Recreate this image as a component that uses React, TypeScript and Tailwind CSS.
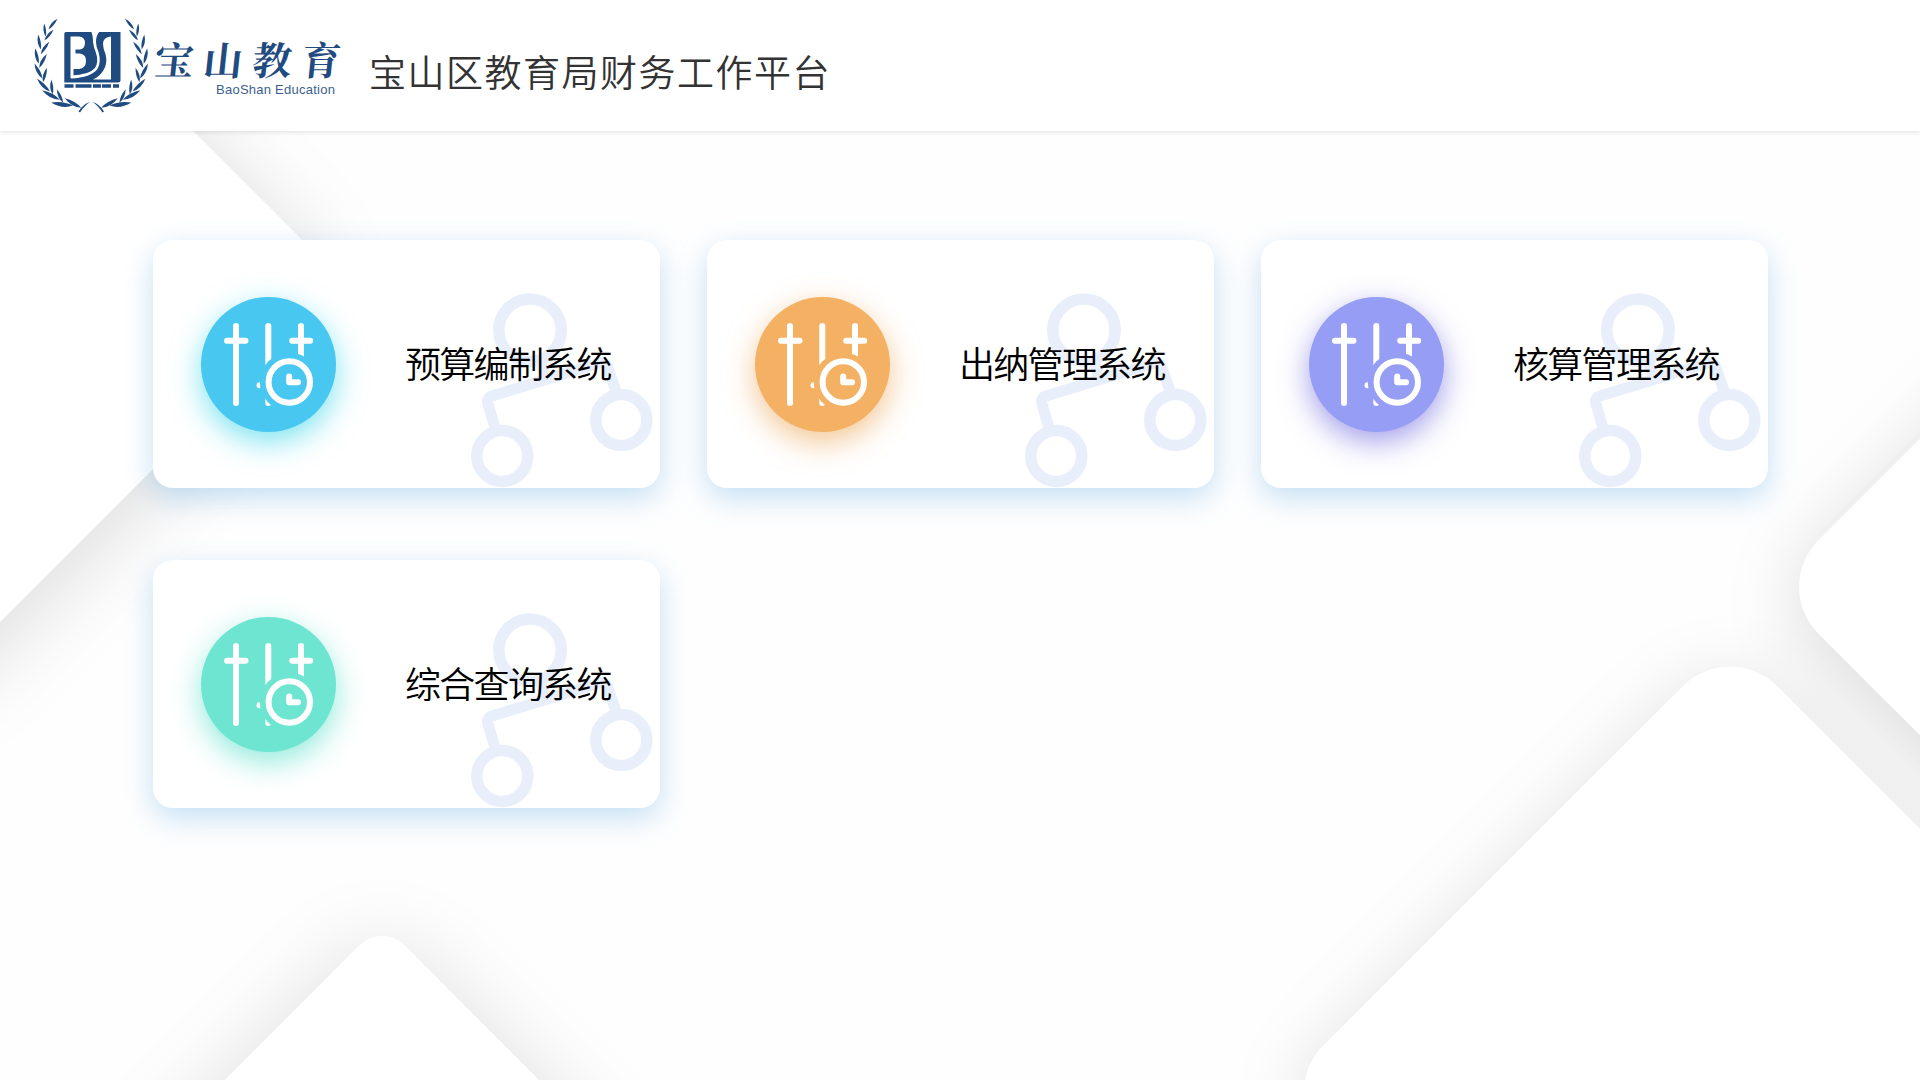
const SYSTEMS = [
  { name: "预算编制系统", disc: "bg-[#48c7f0] shadow-[0_10px_30px_rgba(40,210,232,0.6)]" },
  { name: "出纳管理系统", disc: "bg-[#f5b163] shadow-[0_10px_30px_rgba(235,160,75,0.6)]" },
  { name: "核算管理系统", disc: "bg-[#969df5] shadow-[0_10px_30px_rgba(100,95,220,0.6)]" },
  { name: "综合查询系统", disc: "bg-[#6de5d1] shadow-[0_10px_30px_rgba(70,220,195,0.6)]" },
];

// Centre x, centre y, rotation and length of each leaf on the left branch.
const LEAVES: [number, number, number, number][] = [
  [53, 24, -50, 14],
  [45, 30, -97, 13],
  [49, 35, -50, 14],
  [39.5, 42, -100, 15],
  [45, 48, -55, 15],
  [37, 56, -103, 16],
  [43, 61, -62, 16],
  [38.5, 71, -118, 17],
  [45, 75, -75, 15],
  [43.5, 85, -135, 18],
  [52, 87, -95, 15],
  [51, 95, -152, 20],
  [60, 96, -115, 15],
  [62, 104, -172, 22],
  [73, 103, -150, 19],
];

function Leaf({ x, y, angle, len }: { x: number; y: number; angle: number; len: number }) {
  const h = len / 2;
  return (
    <path
      d={`M${-h} 0Q${-h * 0.1} ${-len * 0.24} ${h} 0Q${-h * 0.1} ${len * 0.16} ${-h} 0Z`}
      transform={`translate(${x} ${y}) rotate(${angle})`}
    />
  );
}

function Branch() {
  return (
    <g>
      {LEAVES.map(([x, y, a, l], i) => (
        <Leaf key={i} x={x} y={y} angle={a} len={l} />
      ))}
      <path d="M78.500 111.500Q83 104 90 102Q85 105 80 112.500Z" />
    </g>
  );
}

function Emblem() {
  return (
    <svg className="h-[131px] w-[152px] shrink-0" viewBox="0 0 152 131" fill="#1f4b80">
      <Branch />
      <g transform="translate(182.500 0) scale(-1 1)">
        <Branch />
      </g>
      <path d="M66 32H120.500V80.500Q120.500 82.500 118 82.500H64.300V34Q64.300 32 66 32Z" />
      <path
        d="M70.500 36.500H79Q85 37 85 43Q85 48.500 80 49.500H75.500V53.500H80Q86.500 54.500 86 61.500Q85.500 68.500 79 69H73.500V78H70.500Z"
        fill="#fff"
      />
      <path d="M91 31Q93 35 93 42Q93.500 47 96 53Q99 62 95 68Q89 75 71 75.500V78.500Q91 77.500 97.500 69Q101.500 62 98.500 52Q96 46 96 42Q96 35 100 31Z" fill="#fff" />
      <path d="M111 36.500Q103 37 103 44Q103 48 105.500 54Q108 64 103 71Q99 77 93 79.500H111Z" fill="#fff" />
      <path d="M64.500 86H119" fill="none" stroke="#1f4b80" strokeWidth="3.500" strokeDasharray="9 2 16 1.500 8 1" />
    </svg>
  );
}

function SlidersClock() {
  return (
    <svg className="size-[135px]" viewBox="0 0 135 135" fill="none" stroke="#fff" strokeWidth="6" strokeLinecap="round" strokeLinejoin="round">
      <defs>
        <mask id="clockGap" maskUnits="userSpaceOnUse" x="0" y="0" width="135" height="135">
          <rect width="135" height="135" fill="#fff" stroke="none" />
          <circle cx="88.300" cy="85" r="29.500" fill="#000" stroke="none" />
        </mask>
      </defs>
      <path d="M35 29V106M26 43.700H44.500" />
      <g mask="url(#clockGap)">
        <path d="M67.300 29V106M58.500 88.300H78M100 29V80M91.200 43.700H109.200" />
      </g>
      <circle cx="88.300" cy="85" r="20.700" />
      <path d="M88.200 79.500V85.300H97" />
    </svg>
  );
}

function NodeMark() {
  return (
    <svg className="absolute bottom-0 right-0 h-[200px] w-[200px]" viewBox="460 288 200 200" fill="none" stroke="#e8eefa">
      <circle cx="530" cy="330.200" r="31.200" strokeWidth="11.500" />
      <circle cx="621.300" cy="420" r="25.500" strokeWidth="11.500" />
      <circle cx="502.300" cy="456" r="25.500" strokeWidth="11.500" />
      <path d="M495 428L488 404Q486 398 492 396L600 363Q606 362 608 368L617 394M540 360L546 380" strokeWidth="11" />
    </svg>
  );
}

function Backdrop() {
  return (
    <div className="absolute inset-0 overflow-hidden">
      <div className="absolute -left-[382px] -top-[20px] size-[600px] rotate-45 rounded-[66px] bg-white shadow-[10px_10px_90px_rgba(0,0,0,0.15)]" />
      <div className="absolute left-[1896px] top-[287px] size-[600px] rotate-45 rounded-[66px] bg-white shadow-[10px_10px_80px_rgba(0,0,0,0.15)]" />
      <div className="absolute left-[1409px] top-[772px] size-[642px] rotate-45 rounded-[67px] bg-white/85 shadow-[10px_10px_80px_rgba(0,0,0,0.13)]" />
      <div className="absolute left-[82px] top-[1047px] size-[600px] rotate-45 rounded-[32px] bg-white shadow-[8px_8px_90px_rgba(0,0,0,0.14)]" />
    </div>
  );
}

export default function App() {
  return (
    <div className="relative flex h-[1080px] w-[1920px] flex-col overflow-hidden bg-[#fefefe] font-['Noto_Sans_CJK_SC',sans-serif]">
      <Backdrop />
      <header className="relative flex h-[131px] shrink-0 items-start bg-white shadow-[0_1px_5px_rgba(0,0,0,0.12)]">
        <Emblem />
        <div className="flex w-[192px] flex-col pt-[38px] text-[#1f4b80]">
          <div className="flex justify-between pl-[3px] pr-[3px] font-['Noto_Serif_CJK_SC','Noto_Sans_CJK_SC',serif] text-[39px] font-bold leading-[40px]">
            <span className="-skew-x-6">宝</span>
            <span className="-skew-x-6">山</span>
            <span className="-skew-x-6">教</span>
            <span className="-skew-x-6">育</span>
          </div>
          <div className="pl-[64px] pt-[5px] font-['Liberation_Sans',sans-serif] text-[13px] leading-[14px] tracking-[0.250px] text-[#3a5f8e]">
            BaoShan Education
          </div>
        </div>
        <h1 className="pl-[25px] pt-[45px] text-[37px] font-[350] leading-[52px] tracking-[1.500px] text-[#333]">
          宝山区教育局财务工作平台
        </h1>
      </header>
      <main className="relative grid grid-cols-[507px_507px_507px] gap-x-[47px] gap-y-[72px] pl-[153px] pt-[109px]">
        {SYSTEMS.map((s) => (
          <section
            key={s.name}
            className="relative flex h-[248px] items-center rounded-[20px] bg-white pl-[48px] shadow-[0_10px_30px_rgba(80,160,225,0.33)]"
          >
            <NodeMark />
            <div className={`size-[135px] shrink-0 rounded-full ${s.disc}`}>
              <SlidersClock />
            </div>
            <h2 className="relative pb-[5px] pl-[69px] text-[36px] font-[350] tracking-[-1.700px] text-black">{s.name}</h2>
          </section>
        ))}
      </main>
    </div>
  );
}
